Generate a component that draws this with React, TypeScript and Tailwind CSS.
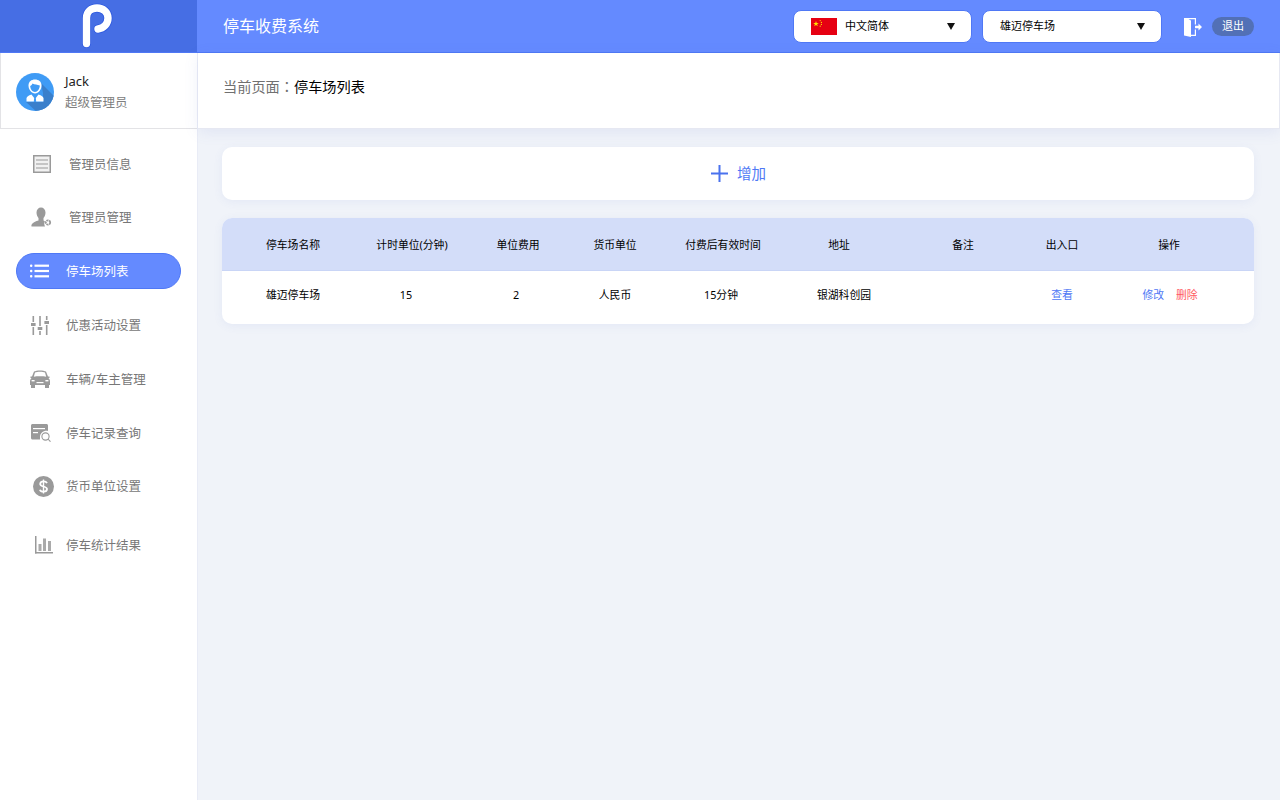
import React from 'react';

const FONT = "font-['Noto_Sans','Noto_Sans_CJK_SC',sans-serif]";

const LOGO_PATH = 'M5.5 42.5V17C5.5 11 10 7 16 7C22 7 27 11 27 17C27 23 22.5 27.5 17 28';

const Logo = () => (
    <svg width="34" height="50" viewBox="0 0 34 50" fill="none">
        <path d={LOGO_PATH} stroke="#2f5ae0" strokeWidth="9" strokeLinecap="round" />
        <path d={LOGO_PATH} stroke="#ffffff" strokeWidth="7.4" strokeLinecap="round" />
    </svg>
);

const Avatar = () => (
    <svg width="38" height="38" viewBox="0 0 38 38">
        <clipPath id="avatarClip"><circle cx="19" cy="19" r="19" /></clipPath>
        <circle cx="19" cy="19" r="19" fill="#3f9bf5" />
        <g clipPath="url(#avatarClip)">
            <path d="M25 10L40 25V40H22L10 29H27V20Z" fill="#3a7fcb" />
        </g>
        <path d="M12.5 12.5C12.5 8.5 15.5 6.5 19 6.5C22.5 6.5 25.5 8.5 25.5 12.5C25.5 16.5 22.5 20.5 19 20.5C15.5 20.5 12.5 16.5 12.5 12.5Z" fill="#fff" />
        <path d="M14.2 13C15.5 12.5 16 11.5 16.5 10.5C18.5 11.5 21.5 11.8 23.8 12.5C23.8 15.5 21.5 19 19 19C16.5 19 14.2 16 14.2 13Z" fill="#3f9bf5" />
        <path d="M10.5 28.5V25.5C10.5 23.5 12.5 22.5 15.5 21.5L18.2 25L17.8 28.5Z" fill="#fff" />
        <path d="M27.5 28.5V25.5C27.5 23.5 25.5 22.5 22.5 21.5L19.8 25L20.2 28.5Z" fill="#fff" />
    </svg>
);

const Flag = () => (
    <svg width="26" height="17" viewBox="0 0 26 17">
        <rect width="26" height="17" fill="#e60012" />
        <polygon points="5,3 5.7,5 7.8,5 6.1,6.3 6.8,8.3 5,7.1 3.2,8.3 3.9,6.3 2.2,5 4.3,5" fill="#ffe000" />
        <circle cx="9.2" cy="2.6" r="0.6" fill="#ffe000" />
        <circle cx="10.4" cy="4.4" r="0.6" fill="#ffe000" />
        <circle cx="10.4" cy="6.4" r="0.6" fill="#ffe000" />
        <circle cx="9.2" cy="8.2" r="0.6" fill="#ffe000" />
    </svg>
);

const ExitIcon = () => (
    <svg width="19" height="20" viewBox="0 0 19 20">
        <path d="M1 1H13V7.5H11.8V2.2H5.5L8 3.5V17.8H11.8V12.5H13V19H8V20L1 18.5Z" fill="#fff" />
        <path d="M12 8.8H15.5V6.5L19 10L15.5 13.5V11.2H12Z" fill="#fff" />
    </svg>
);

const Caret = () => (
    <svg width="8" height="7" viewBox="0 0 8 7"><path d="M0 0H8L4 7Z" fill="#111" /></svg>
);

const G = '#9a9a9a';

const InfoIcon = () => (
    <svg width="18" height="18" viewBox="0 0 18 18" fill="none" stroke={G}>
        <rect x="0.75" y="0.75" width="16.5" height="16.5" strokeWidth="1.5" fill="#f1f1f1" />
        <path d="M3 5H15M3 9H15M3 13H15" strokeWidth="1.2" />
    </svg>
);

const UserGearIcon = () => (
    <svg width="21" height="20" viewBox="0 0 21 20" fill={G}>
        <path d="M5.5 5.5C5.5 2.5 7.5 0.5 10 0.5C12.5 0.5 14.5 2.5 14.5 5.5C14.5 8 13.5 10 12.5 11V13.5L14 14.5C13 15.5 13 17.5 14 19.5H0.5C0 17 2 15 7.5 13.5V11C6.5 10 5.5 8 5.5 5.5Z" />
        <circle cx="17" cy="15.5" r="2.2" fill="none" stroke={G} strokeWidth="1.8" strokeDasharray="2 0.6" />
    </svg>
);

const ListIcon = () => (
    <svg width="19" height="14" viewBox="0 0 19 14" fill="#fff">
        <rect x="0" y="0.5" width="2.4" height="2.4" rx="1" />
        <rect x="0" y="5.8" width="2.4" height="2.4" rx="1" />
        <rect x="0" y="11.1" width="2.4" height="2.4" rx="1" />
        <rect x="4.5" y="0.6" width="14.5" height="2.2" />
        <rect x="4.5" y="5.9" width="14.5" height="2.2" />
        <rect x="4.5" y="11.2" width="14.5" height="2.2" />
    </svg>
);

const SlidersIcon = () => (
    <svg width="18" height="19" viewBox="0 0 18 19" fill={G}>
        <rect x="1.5" y="0" width="1.6" height="6" />
        <rect x="0" y="7" width="4.6" height="3" />
        <rect x="1.5" y="11" width="1.6" height="8" />
        <rect x="8.2" y="0" width="1.6" height="10" />
        <rect x="6.7" y="11" width="4.6" height="3" />
        <rect x="8.2" y="15" width="1.6" height="4" />
        <rect x="14.9" y="0" width="1.6" height="4" />
        <rect x="13.4" y="5" width="4.6" height="3" />
        <rect x="14.9" y="9" width="1.6" height="10" />
    </svg>
);

const CarIcon = () => (
    <svg width="20" height="18" viewBox="0 0 20 18" fill={G}>
        <path d="M4 1.5C6.5 0 13.5 0 16 1.5L18 6.5H19.5V8H18.5C19.5 9 20 10 20 11V15H0V11C0 10 0.5 9 1.5 8H0.5V6.5H2ZM5 2.6L3.8 6.8C7 6.2 13 6.2 16.2 6.8L15 2.6C13 1.6 7 1.6 5 2.6Z" fillRule="evenodd" />
        <rect x="1" y="15" width="4" height="3" />
        <rect x="15" y="15" width="4" height="3" />
        <rect x="1.6" y="10" width="3" height="1.4" fill="#fff" />
        <rect x="15.4" y="10" width="3" height="1.4" fill="#fff" />
        <rect x="6.5" y="12" width="7" height="1.2" fill="#fff" />
    </svg>
);

const RecordIcon = () => (
    <svg width="20" height="18" viewBox="0 0 20 18">
        <path d="M1.5 0H15.5C16.3 0 17 .7 17 1.5V7C13 6 9 9 9 13V15.5H1.5C.7 15.5 0 14.8 0 14V1.5C0 .7.7 0 1.5 0Z" fill={G} />
        <rect x="2" y="4" width="12" height="1.2" fill="#fff" />
        <rect x="2" y="8" width="5" height="1.2" fill="#fff" />
        <circle cx="14.5" cy="12.5" r="3.6" fill="none" stroke={G} strokeWidth="1.1" />
        <path d="M17 15L19.5 17.7" stroke={G} strokeWidth="1.1" />
    </svg>
);

const DollarIcon = () => (
    <svg width="21" height="21" viewBox="0 0 21 21">
        <circle cx="10.5" cy="10.5" r="10.5" fill={G} />
        <path d="M14 7.2C13.4 5.9 12 5.3 10.5 5.3C8.6 5.3 7.2 6.3 7.2 7.9C7.2 11.2 14 9.8 14 13.1C14 14.7 12.5 15.7 10.5 15.7C8.9 15.7 7.4 15 6.9 13.7" fill="none" stroke="#fff" strokeWidth="1.8" />
        <path d="M10.5 3.5V17.5" stroke="#fff" strokeWidth="1.4" />
    </svg>
);

const ChartIcon = () => (
    <svg width="18" height="18" viewBox="0 0 18 18">
        <rect x="0" y="0" width="1.5" height="17.5" fill="#999" />
        <rect x="0" y="16" width="18" height="1.5" fill="#999" />
        <rect x="3.5" y="8" width="3" height="7" fill="#aaa" />
        <rect x="8" y="2.5" width="3" height="12.5" fill="#aaa" />
        <rect x="13" y="5" width="3" height="10" fill="#aaa" />
    </svg>
);

const navItems = [
    { label: '管理员信息', icon: <InfoIcon />, nudge: 'pl-[4px]', text: 'ml-[12px]', box: 'mt-[17px]' },
    { label: '管理员管理', icon: <UserGearIcon />, nudge: 'pl-[2px]', text: 'ml-[12px]', box: 'mt-[17px]' },
    { label: '停车场列表', icon: <ListIcon />, nudge: 'pr-[4px]', text: 'ml-[8px]', box: 'mt-[18px]', active: true },
    { label: '优惠活动设置', icon: <SlidersIcon />, nudge: '', text: 'ml-[9px]', box: 'mt-[18px]' },
    { label: '车辆/车主管理', icon: <CarIcon />, nudge: '', text: 'ml-[9px]', box: 'mt-[18px]' },
    { label: '停车记录查询', icon: <RecordIcon />, nudge: 'pl-[2px]', text: 'ml-[9px]', box: 'mt-[18px]' },
    { label: '货币单位设置', icon: <DollarIcon />, nudge: 'pl-[6px]', text: 'ml-[9px]', box: 'mt-[17px]' },
    { label: '停车统计结果', icon: <ChartIcon />, nudge: 'pl-[8px]', text: 'ml-[9px]', box: 'mt-[23px]' },
];

const columns = [
    { head: '停车场名称', w: 'w-[142px]', cell: '雄迈停车场', shift: '' },
    { head: '计时单位(分钟)', w: 'w-[96px]', cell: '15', shift: 'pr-[12px]' },
    { head: '单位费用', w: 'w-[116px]', cell: '2', shift: 'pr-[4px]' },
    { head: '货币单位', w: 'w-[78px]', cell: '人民币', shift: '' },
    { head: '付费后有效时间', w: 'w-[138px]', cell: '15分钟', shift: 'pr-[4px]' },
    { head: '地址', w: 'w-[94px]', cell: '银湖科创园', shift: 'pl-[10px]' },
    { head: '备注', w: 'w-[154px]', cell: '', shift: '' },
];

export default function App() {
    return (
        <div className={`${FONT} flex flex-col min-h-[800px] h-[800px] overflow-hidden bg-[#f0f3f9]`}>
            {/* 顶部栏 */}
            <header className="flex h-[53px] shrink-0 bg-[#648aff] border-b border-[#4f78f5]">
                <div className="w-[197px] shrink-0 bg-[#466ee4] flex items-center justify-center pr-[2px]">
                    <Logo />
                </div>
                <div className="flex-1 flex items-center pl-[26px]">
                    <span className="text-white text-[16px]">停车收费系统</span>
                    <div className="ml-auto pt-[1px] flex items-center">
                        <div className="w-[179px] h-[33px] bg-white rounded-[8px] border border-[#4f78f5] flex items-center pl-[17px] pr-[16px] text-[11px] text-black">
                            <Flag />
                            <span className="ml-[8px]">中文简体</span>
                            <span className="ml-auto"><Caret /></span>
                        </div>
                        <div className="ml-[10px] w-[180px] h-[33px] bg-white rounded-[8px] border border-[#4f78f5] flex items-center pl-[17px] pr-[16px] text-[11px] text-black">
                            <span>雄迈停车场</span>
                            <span className="ml-auto"><Caret /></span>
                        </div>
                        <span className="ml-[21px] flex"><ExitIcon /></span>
                        <span className="ml-[10px] mr-[26px] -mt-[1px] w-[42px] h-[19px] rounded-full bg-[#5270b6] text-white text-[11px] flex items-center justify-center">退出</span>
                    </div>
                </div>
            </header>

            <div className="flex flex-1 min-h-0">
                {/* 侧边栏 */}
                <aside className="w-[198px] shrink-0 bg-white border-r border-[#e9ecf6] flex flex-col">
                    <div className="h-[76px] border-l border-b border-[#e3e3e6] flex items-center pl-[15px] pt-[2px]">
                        <Avatar />
                        <div className="ml-[11px] flex flex-col">
                            <span className="text-[13px] leading-[22px] text-[#222]">Jack</span>
                            <span className="text-[12.5px] leading-[22px] text-[#808080]">超级管理员</span>
                        </div>
                    </div>
                    <nav className="flex flex-col">
                        {navItems.map(item => (
                            <div
                                key={item.label}
                                className={`${item.box} ml-[16px] w-[165px] h-[36px] rounded-full flex items-center ${item.active ? 'bg-[#648aff] border border-[#4f78f5] text-white' : 'text-[#777]'}`}
                            >
                                <span className={`${item.nudge} w-[34px] ml-[7px] flex justify-center shrink-0`}>{item.icon}</span>
                                <span className={`${item.text} mt-[2px] text-[12.5px] whitespace-nowrap`}>{item.label}</span>
                            </div>
                        ))}
                    </nav>
                </aside>

                {/* 主内容 */}
                <main className="flex-1 min-w-0 flex flex-col">
                    <div className="h-[76px] bg-white border-r border-b border-[#e6e8f2] flex items-center pl-[25px] pb-[8px] text-[14.2px] shadow-[0_3px_14px_rgba(90,110,200,0.1)]">
                        <span className="text-[#707070]">当前页面<span className="font-['Noto_Sans_CJK_TC']">：</span></span>
                        <span className="text-black">停车场列表</span>
                    </div>

                    <div className="px-[24px] pt-[18px] pr-[26px] flex flex-col gap-[18px]">
                        <div className="h-[53px] bg-white rounded-[10px] shadow-[0_2px_10px_rgba(90,110,200,0.08)] flex items-center justify-center pl-[1px]">
                            <svg width="17" height="17" viewBox="0 0 17 17"><path d="M8.5 0V17M0 8.5H17" stroke="#4a72ee" strokeWidth="2" /></svg>
                            <span className="ml-[9px] text-[14.5px] text-[#4f78f5]">增加</span>
                        </div>

                        <div className="bg-white rounded-[10px] overflow-hidden shadow-[0_2px_10px_rgba(90,110,200,0.08)]">
                            <div className="flex h-[53px] items-center pt-[2px] bg-[#d3ddf9] border-b border-[#c9d5f6] text-[10.8px] text-black">
                                {columns.map(col => (
                                    <div key={col.head} className={`${col.w} text-center whitespace-nowrap`}>{col.head}</div>
                                ))}
                                <div className="w-[44px] text-center whitespace-nowrap">出入口</div>
                                <div className="w-[170px] text-center">操作</div>
                            </div>
                            <div className="flex h-[53px] items-center pb-[4px] text-[10.8px] text-black">
                                {columns.map(col => (
                                    <div key={col.head} className={`${col.w} ${col.shift} text-center whitespace-nowrap`}>{col.cell}</div>
                                ))}
                                <div className="w-[44px] text-center text-[#4f78f5]">查看</div>
                                <div className="w-[170px] flex justify-center gap-[12px] pl-[2px]">
                                    <span className="text-[#4f78f5]">修改</span>
                                    <span className="text-[#ff5a5f]">删除</span>
                                </div>
                            </div>
                        </div>
                    </div>
                </main>
            </div>
        </div>
    );
}
